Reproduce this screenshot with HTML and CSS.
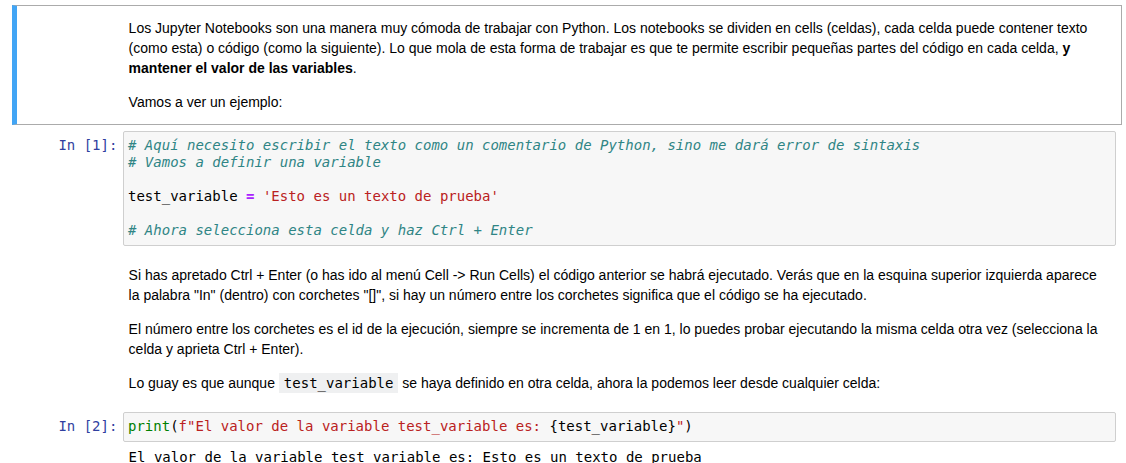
FILE: index.html
```html
<!DOCTYPE html>
<html lang="es">
<head>
<meta charset="utf-8">
<title>Notebook</title>
<link rel="stylesheet" href="styles.css">
</head>
<body>
<div class="notebook">
  <div class="cell text-cell selected">
    <div class="prompt"></div>
    <div class="inner-cell">
      <div class="rendered">
        <p>Los Jupyter Notebooks son una manera muy cómoda de trabajar con Python. Los notebooks se dividen en cells (celdas), cada celda puede contener texto (como esta) o código (como la siguiente). Lo que mola de esta forma de trabajar es que te permite escribir pequeñas partes del código en cada celda, <strong>y mantener el valor de las variables</strong>.</p>
        <p>Vamos a ver un ejemplo:</p>
      </div>
    </div>
  </div>

  <div class="cell code-cell">
    <div class="input">
      <div class="prompt in-prompt">In&nbsp;[1]:</div>
      <div class="inner-cell">
        <pre class="input-area"><span class="c"># Aquí necesito escribir el texto como un comentario de Python, sino me dará error de sintaxis</span>
<span class="c"># Vamos a definir una variable</span>

test_variable <span class="o">=</span> <span class="s">'Esto es un texto de prueba'</span>

<span class="c"># Ahora selecciona esta celda y haz Ctrl + Enter</span></pre>
      </div>
    </div>
  </div>

  <div class="cell text-cell">
    <div class="prompt"></div>
    <div class="inner-cell">
      <div class="rendered">
        <p>Si has apretado Ctrl + Enter (o has ido al menú Cell -&gt; Run Cells) el código anterior se habrá ejecutado. Verás que en la esquina superior izquierda aparece la palabra "In" (dentro) con corchetes "[]", si hay un número entre los corchetes significa que el código se ha ejecutado.</p>
        <p>El número entre los corchetes es el id de la ejecución, siempre se incrementa de 1 en 1, lo puedes probar ejecutando la misma celda otra vez (selecciona la celda y aprieta Ctrl + Enter).</p>
        <p>Lo guay es que aunque <code>test_variable</code> se haya definido en otra celda, ahora la podemos leer desde cualquier celda:</p>
      </div>
    </div>
  </div>

  <div class="cell code-cell">
    <div class="input">
      <div class="prompt in-prompt">In&nbsp;[2]:</div>
      <div class="inner-cell">
        <pre class="input-area"><span class="b">print</span>(<span class="s">f"El valor de la variable test_variable es: </span>{test_variable}<span class="s">"</span>)</pre>
      </div>
    </div>
    <div class="output">
      <div class="prompt"></div>
      <pre class="output-area">El valor de la variable test_variable es: Esto es un texto de prueba</pre>
    </div>
  </div>
</div>
</body>
</html>
```

FILE: styles.css
```css
html, body {
  margin: 0;
  padding: 0;
  background: #fff;
}

body {
  font-family: "Liberation Sans", Arial, sans-serif;
  font-size: 14px;
  color: #000;
}

.notebook {
  width: 1110px;
  padding-left: 12px;
  padding-top: 5px;
}

.cell {
  border: 1px solid transparent;
  padding: 5px;
  box-sizing: border-box;
  width: 1110px;
}

.cell.selected {
  border-color: #ababab;
  border-left: 5px solid #42a5f5;
  padding-left: 1px;
}

.text-cell {
  display: flex;
}

.input,
.output {
  display: flex;
}

.prompt {
  flex: 0 0 105px;
  width: 105px;
  box-sizing: border-box;
  padding: 0.4em;
  font-family: "DejaVu Sans Mono", monospace;
  font-size: 14px;
  line-height: 17px;
  text-align: right;
}

.in-prompt {
  color: #303f9f;
}

.inner-cell {
  flex: 1 1 auto;
  min-width: 0;
}

.rendered {
  padding: 7px 7px 7px 5.6px;
  line-height: 20px;
}

.rendered p {
  margin: 14px 0 0 0;
}

.rendered p:first-child {
  margin-top: 0;
}

.rendered code {
  display: inline-block;
  font-family: "DejaVu Sans Mono", monospace;
  font-size: 14px;
  line-height: 18px;
  background: #eff0f1;
  padding: 1px 5px;
}

.input-area {
  margin: 0;
  border: 1px solid #cfcfcf;
  border-radius: 2px;
  background: #f7f7f7;
  padding: 5px 4px 6px;
  font-family: "DejaVu Sans Mono", monospace;
  font-size: 14px;
  line-height: 17px;
  color: #000;
  white-space: pre;
}

.input-area .c {
  color: #2f8585;
  font-style: italic;
}

.input-area .s {
  color: #ba2121;
}

.input-area .o {
  color: #aa22ff;
  font-weight: bold;
}

.input-area .b {
  color: #008000;
}

.output-area {
  margin: 0;
  padding: 7px 5.6px;
  font-family: "DejaVu Sans Mono", monospace;
  font-size: 14px;
  line-height: 17px;
  color: #000;
}
```
